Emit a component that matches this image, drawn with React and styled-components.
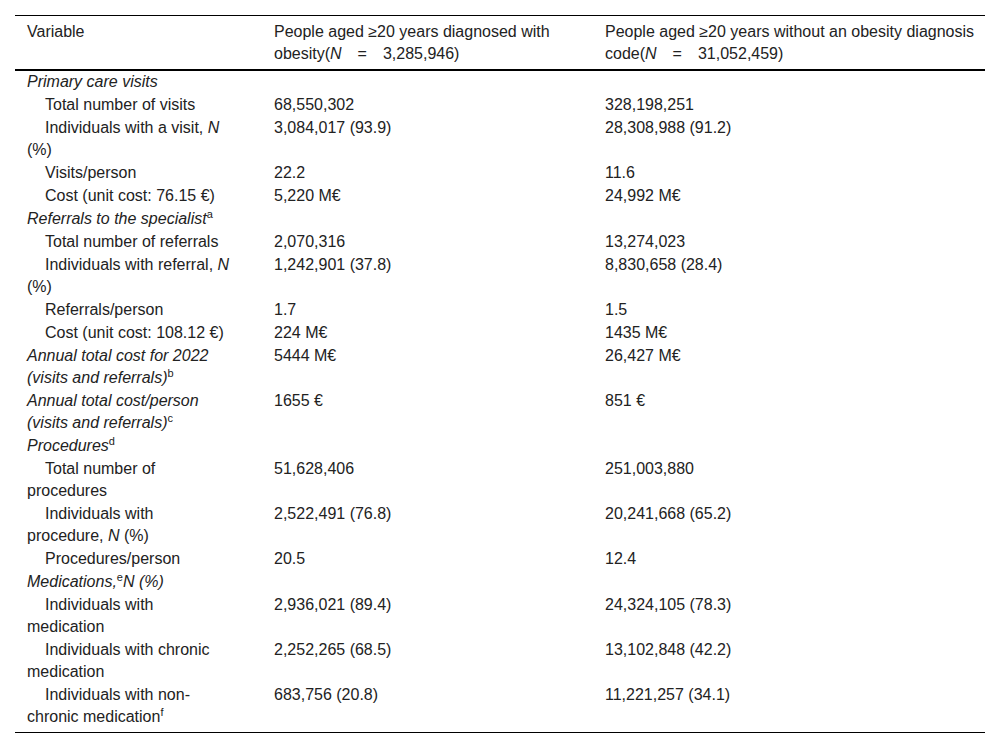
import React from "react";
import styled, { createGlobalStyle } from "styled-components";

const Global = createGlobalStyle`
  html, body { margin: 0; padding: 0; background: #fff; }
  body { font-family: "Liberation Sans", Arial, sans-serif; color: #222; }
`;

const Page = styled.div`
  padding: 15px 15px 0 15px;
`;

const Table = styled.table`
  width: 970px;
  border-collapse: collapse;
  table-layout: fixed;
  font-size: 16px;
  line-height: 22px;
  border-top: 1px solid #000;
  border-bottom: 1px solid #000;
`;

const Head = styled.thead`
  border-bottom: 2px solid #000;
`;

const Th = styled.th`
  text-align: left;
  font-weight: normal;
  vertical-align: top;
  padding: 5px ${(p) => p.$pr || 8}px 4px 12px;
`;

const Body = styled.tbody`
  tr:last-child td { padding-bottom: 4px; }
`;

const Td = styled.td`
  vertical-align: top;
  padding: 0 ${(p) => p.$pr || 8}px 1px 12px;
  text-indent: ${(p) => (p.$indent ? "18px" : "0")};
  font-style: ${(p) => (p.$italic ? "italic" : "normal")};
`;

const Sup = styled.sup`
  font-size: 11px;
  line-height: 0;
  vertical-align: 6px;
  font-style: normal;
`;

const I = styled.i``;

const rows = [
  { g: "Primary care visits" },
  { l: "Total number of visits", a: "68,550,302", b: "328,198,251" },
  { l: <>Individuals with a visit, <I>N</I> (%)</>, a: "3,084,017 (93.9)", b: "28,308,988 (91.2)" },
  { l: "Visits/person", a: "22.2", b: "11.6" },
  { l: "Cost (unit cost: 76.15 €)", a: "5,220 M€", b: "24,992 M€" },
  { g: <>Referrals to the specialist<Sup>a</Sup></> },
  { l: "Total number of referrals", a: "2,070,316", b: "13,274,023" },
  { l: <>Individuals with referral, <I>N</I> (%)</>, a: "1,242,901 (37.8)", b: "8,830,658 (28.4)" },
  { l: "Referrals/person", a: "1.7", b: "1.5" },
  { l: "Cost (unit cost: 108.12 €)", a: "224 M€", b: "1435 M€" },
  { g: <>Annual total cost for 2022 (visits and referrals)<Sup>b</Sup></>, a: "5444 M€", b: "26,427 M€" },
  { g: <>Annual total cost/person (visits and referrals)<Sup>c</Sup></>, a: "1655 €", b: "851 €" },
  { g: <>Procedures<Sup>d</Sup></> },
  { l: "Total number of procedures", a: "51,628,406", b: "251,003,880" },
  { l: <>Individuals with procedure, <I>N</I> (%)</>, a: "2,522,491 (76.8)", b: "20,241,668 (65.2)" },
  { l: "Procedures/person", a: "20.5", b: "12.4" },
  { g: <>Medications,<Sup>e</Sup>N (%)</> },
  { l: "Individuals with medication", a: "2,936,021 (89.4)", b: "24,324,105 (78.3)" },
  { l: "Individuals with chronic medication", a: "2,252,265 (68.5)", b: "13,102,848 (42.2)" },
  { l: <>Individuals with non-chronic medication<Sup>f</Sup></>, a: "683,756 (20.8)", b: "11,221,257 (34.1)" },
];

export default function App() {
  return (
    <Page>
      <Global />
      <Table>
        <colgroup>
          <col style={{ width: 247 }} />
          <col style={{ width: 331 }} />
          <col style={{ width: 392 }} />
        </colgroup>
        <Head>
          <tr>
            <Th $pr={31}>Variable</Th>
            <Th $pr={40}>
              People aged ≥20 years diagnosed with obesity(<I>N</I>{"\u2003=\u2003"}3,285,946)
            </Th>
            <Th $pr={8}>
              People aged ≥20 years without an obesity diagnosis code(<I>N</I>{"\u2003=\u2003"}31,052,459)
            </Th>
          </tr>
        </Head>
        <Body>
          {rows.map((r, i) => (
            <tr key={i}>
              {r.g ? (
                <Td $pr={31} $italic>{r.g}</Td>
              ) : (
                <Td $pr={31} $indent>{r.l}</Td>
              )}
              <Td $pr={40}>{r.a || ""}</Td>
              <Td $pr={8}>{r.b || ""}</Td>
            </tr>
          ))}
        </Body>
      </Table>
    </Page>
  );
}
